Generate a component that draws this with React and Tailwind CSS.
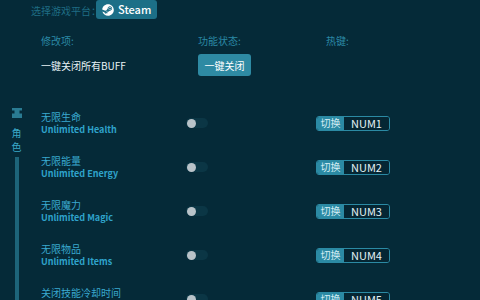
import { FaSteam } from "react-icons/fa";

const ROWS = [
  { cn: "无限生命", en: "Unlimited Health", key: "NUM1" },
  { cn: "无限能量", en: "Unlimited Energy", key: "NUM2" },
  { cn: "无限魔力", en: "Unlimited Magic", key: "NUM3" },
  { cn: "无限物品", en: "Unlimited Items", key: "NUM4" },
  { cn: "关闭技能冷却时间", en: "No Skill Cooldown", key: "NUM5" },
];

function Toggle() {
  return (
    <div className="w-[22px] h-[10px] rounded-full bg-[#0b3645] flex items-center pl-[1px]">
      <div className="w-[9px] h-[9px] rounded-full bg-[#b9c3c9]" />
    </div>
  );
}

function HotKey({ label }) {
  return (
    <div className="flex h-[15px] rounded-[3px] border border-[#2b8aa4] overflow-hidden">
      <div className="w-[27px] bg-[#2b8aa4] text-[10px] leading-none text-[#d6eef5] flex items-center justify-center">
        切换
      </div>
      <div className="w-[45px] bg-[#052633] text-[11px] leading-none text-[#e6f3f7] flex items-center justify-center">
        {label}
      </div>
    </div>
  );
}

export default function App() {
  return (
    <div className="w-[480px] h-[300px] overflow-hidden bg-[#052a38] font-['Noto_Sans_CJK_SC',sans-serif] flex flex-col">
      {/* platform */}
      <div className="h-[21px] flex items-center pl-[31px]">
        <span className="text-[10px] text-[#1f6d84] w-[65px] whitespace-nowrap leading-[14px] mt-[2px]">选择游戏平台：</span>
        <div className="h-[19px] px-[6px] rounded-[3px] bg-[#1c6f87] flex items-center gap-[4px] text-white">
          <FaSteam size={12} />
          <span className="text-[11px] font-medium leading-none">Steam</span>
        </div>
      </div>

      {/* headers */}
      <div className="mt-[14px] h-[16px] flex items-center pl-[41px] text-[10px] text-[#2b89a5]">
        <span className="w-[157px]">修改项:</span>
        <span className="w-[128px]">功能状态:</span>
        <span>热键:</span>
      </div>

      {/* close all */}
      <div className="mt-[6px] h-[22px] flex items-center pl-[41px]">
        <span className="w-[157px] text-[10px] text-[#e8f2f5]">一键关闭所有BUFF</span>
        <button className="w-[53px] h-[22px] rounded-[3px] bg-[#2e8aa3] text-[10px] text-white">
          一键关闭
        </button>
      </div>

      {/* section */}
      <div className="mt-[25px] flex flex-1">
        <div className="w-[41px] flex flex-col items-center pr-[8px] pt-[7px]">
          <svg width="12" height="10" viewBox="0 0 12 10" fill="#2a7b92">
            <path d="M1 0h10v2.5H8.5v3H11V10H1V5.5h2.5v-3H1z" />
          </svg>
          <span className="mt-[8px] text-[10px] leading-[13px] text-[#3aa8c8]">角</span>
          <span className="mt-[1px] text-[10px] leading-[13px] text-[#3aa8c8]">色</span>
          <div className="mt-[4px] w-[4px] flex-1 bg-[#1d6479]" />
        </div>
        <div className="flex flex-col">
          {ROWS.map((r) => (
            <div key={r.key} className="h-[44px] flex items-center">
              <div className="w-[145px] flex flex-col">
                <span className="text-[10px] leading-[14px] text-[#3aa9cf] whitespace-nowrap">{r.cn}</span>
                <span className="text-[9px] leading-[12px] font-bold text-[#2fa3cb] whitespace-nowrap">{r.en}</span>
              </div>
              <div className="w-[130px]">
                <Toggle />
              </div>
              <HotKey label={r.key} />
            </div>
          ))}
        </div>
      </div>
    </div>
  );
}
